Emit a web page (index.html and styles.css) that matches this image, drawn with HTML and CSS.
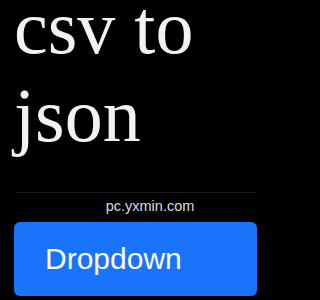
FILE: index.html
```html
<!DOCTYPE html>
<html>
<head>
<meta charset="utf-8">
<link rel="stylesheet" href="styles.css">
</head>
<body>
<main class="page">
  <h1 class="title">csv to json</h1>
  <div class="rule"></div>
  <p class="domain">pc.yxmin.com</p>
  <button class="btn">Dropdown</button>
</main>
</body>
</html>
```
FILE: styles.css
```css
html, body {
  margin: 0;
  padding: 0;
  background: #000;
  width: 300px;
  height: 300px;
  overflow: hidden;
}
.page {
  display: flex;
  flex-direction: column;
  align-items: flex-start;
}
.title {
  margin: -17px 0 0 14px;
  font-family: "Liberation Serif", "Times New Roman", serif;
  font-weight: normal;
  font-size: 76px;
  line-height: 88px;
  color: #f2f2f2;
  width: 240px;
}
.rule {
  margin: 33px 0 0 16px;
  width: 240px;
  height: 1px;
  background: #1c1c1c;
}
.domain {
  align-self: stretch;
  margin: 3px 0 0;
  text-align: center;
  font-family: "Liberation Sans", Arial, sans-serif;
  font-size: 14.5px;
  line-height: 20px;
  color: #dcdcdc;
}
.btn {
  margin: 6px 0 0 14px;
  width: 243px;
  height: 74px;
  border: none;
  border-radius: 6px;
  background: #1a73fb;
  color: #fff;
  font-family: "Liberation Sans", Arial, sans-serif;
  font-size: 30px;
  text-align: left;
  padding: 0 0 0 31px;
}
```
